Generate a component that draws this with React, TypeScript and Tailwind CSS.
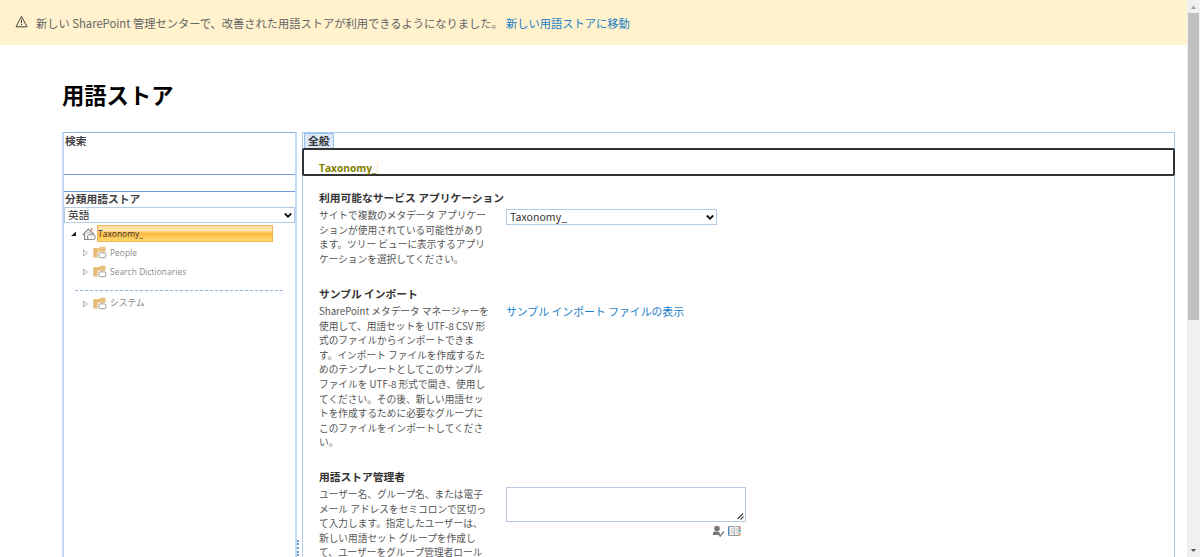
import type { ReactNode } from 'react';

const applicationText = [
  'サイトで複数のメタデータ アプリケー',
  'ションが使用されている可能性があり',
  'ます。ツリー ビューに表示するアプリ',
  'ケーションを選択してください。',
];

const importText = [
  'SharePoint メタデータ マネージャーを',
  '使用して、用語セットを UTF-8 CSV 形',
  '式のファイルからインポートできま',
  'す。インポート ファイルを作成するた',
  'めのテンプレートとしてこのサンプル',
  'ファイルを UTF-8 形式で開き、使用し',
  'てください。その後、新しい用語セッ',
  'トを作成するために必要なグループに',
  'このファイルをインポートしてくださ',
  'い。',
];

const adminText = [
  'ユーザー名、グループ名、または電子',
  'メール アドレスをセミコロンで区切っ',
  'て入力します。指定したユーザーは、',
  '新しい用語セット グループを作成し',
  'て、ユーザーをグループ管理者ロール',
];

function Chevron() {
  return (
    <svg className="pointer-events-none absolute right-[3px] top-[5px]" width="8" height="7" viewBox="0 0 8 7" fill="none">
      <path d="M0.8 1.5 L4 4.7 L7.2 1.5" stroke="#111" strokeWidth="1.8" />
    </svg>
  );
}

function Select({ value }: { value: string }) {
  return (
    <div className="relative">
      <select className="block h-4 w-full appearance-none border border-[#b4cbe2] bg-white pl-[3px] leading-[14px] text-[#333]">
        <option>{value}</option>
      </select>
      <Chevron />
    </div>
  );
}

function FolderIcon() {
  return (
    <svg width="14" height="13" viewBox="0 0 14 13">
      <path d="M0.5 2 H6 L7 0.8 H12.5 V11 H0.5 Z" fill="#e9c27f" />
      <path d="M0.5 3.5 L4 3 V11.5 H0.5 Z" fill="#e6ba72" />
      <rect x="4.6" y="5.8" width="9.4" height="7" fill="#fff" />
      <rect x="5.8" y="6.9" width="7" height="4.8" rx="1.6" fill="#fff" stroke="#999" />
    </svg>
  );
}

function HomeIcon() {
  return (
    <svg width="14" height="14" viewBox="0 0 14 14" fill="none">
      <path d="M0.8 7.8 L6.5 2 L12 7.5 M2.6 7 V12.5 H6" stroke="#888" strokeWidth="1.2" />
      <path d="M9.6 1 V3.6" stroke="#dd6a52" strokeWidth="1.3" />
      <path d="M4.2 7.4 L6.5 5 L9 7" stroke="#aaa" />
      <rect x="5.6" y="7.6" width="7.4" height="5" rx="1.6" fill="#f8f8f8" stroke="#888" />
    </svg>
  );
}

function TreeItem({ label }: { label: string }) {
  return (
    <div className="flex h-[19px] items-center pl-[19px]">
      <svg width="5" height="8" viewBox="0 0 5 8" fill="none">
        <path d="M0.6 1 V7 L4.3 4 Z" stroke="#aaa" strokeWidth="0.9" />
      </svg>
      <span className="ml-[5px] w-4">
        <FolderIcon />
      </span>
      <span className="ml-px whitespace-nowrap pt-px text-[#888]">{label}</span>
    </div>
  );
}

function Section({ title, lines, children, className }: { title: string; lines: string[]; children: ReactNode; className: string }) {
  return (
    <section className={className}>
      <h3 className="h-[17px] whitespace-nowrap text-[10.75px] font-bold leading-[17px] text-[#333]">{title}</h3>
      <div className="flex">
        <div className="w-[187px] shrink-0 pt-[2px] text-[9.7px] leading-[14.6px] text-[#555]">
          {lines.map((line) => (
            <div key={line} className="whitespace-nowrap">{line}</div>
          ))}
        </div>
        {children}
      </div>
    </section>
  );
}

export default function App() {
  return (
    <div className="flex h-[557px] w-[1200px] overflow-hidden bg-white font-['Noto_Sans_CJK_JP',sans-serif]">
      <div className="flex w-[1187px] shrink-0 flex-col">
        <header className="flex h-[45px] shrink-0 items-center bg-[#fff2cc] pl-[15px] pt-px text-[11.25px] leading-[17px] text-[#666]">
          <svg className="-mt-[3px]" width="13" height="13" viewBox="0 0 13 13" fill="none">
            <path d="M6.5 1.3 L12 11.8 H1 Z" stroke="#444" />
            <path d="M6.5 4.4 V8.2 M6.5 9 V10.2" stroke="#444" />
          </svg>
          <span className="ml-2 whitespace-nowrap">
            新しい SharePoint 管理センターで、改善された用語ストアが利用できるようになりました。
          </span>
          <a href="#" className="ml-[3px] whitespace-nowrap text-[#1a7fc9]">新しい用語ストアに移動</a>
        </header>

        <h1 className="mt-8 h-9 shrink-0 pl-[62px] text-[22.3px] font-bold leading-[34px] text-black">用語ストア</h1>

        <main className="mt-[19px] flex min-h-0 grow pl-[62px]">
          <aside className="w-[235px] border-x-2 border-t border-x-[#c3d9f5] border-t-[#8db2e3] text-[10.75px]">
            <div className="h-[42px] border-b border-[#6f9ddd] pl-px font-bold leading-4 text-[#444]">検索</div>
            <div className="h-[17px] border-b border-[#6f9ddd]" />
            <div className="h-[15px] pl-px font-bold leading-[14px] text-[#444]">分類用語ストア</div>
            <Select value="英語" />
            <div className="font-['Open_Sans','Noto_Sans_CJK_JP',sans-serif] text-[8.3px] tracking-[0.1px]">
              <div className="mt-px flex h-[19px] items-center pl-[7px]">
                <svg width="6" height="6" viewBox="0 0 6 6">
                  <path d="M5 0.5 V5 H0 Z" fill="#222" />
                </svg>
                <span className="ml-[5px] w-4">
                  <HomeIcon />
                </span>
                <span className="-ml-px h-[17px] w-[176px] border border-[#f2b556] bg-linear-to-b from-[#ffe3a6] from-30% via-[#ffb73c] via-50% to-[#ffdb70] leading-[15px] text-[#333]">
                  Taxonomy_
                </span>
              </div>
              <TreeItem label="People" />
              <TreeItem label="Search Dictionaries" />
              <div className="mb-[3px] ml-[11px] mt-[9px] w-[208px] border-t border-dashed border-[#8fb4e0]" />
              <div className="text-[8.7px]">
                <TreeItem label="システム" />
              </div>
            </div>
          </aside>

          <div className="flex w-[5px] pt-[408px]">
            <div className="h-4 border-l-2 border-dotted border-[#6f94c4]" />
          </div>

          <div className="w-[873px] border border-b-0 border-[#a8c8f0]">
            <div className="ml-px h-[15px] w-[30px] border border-b-0 border-[#9fbfe8] bg-[#dce9fa] pl-[3px] text-[10.75px] font-bold leading-[14px] text-[#333]">
              全般
            </div>
            <div className="-mx-px flex h-7 items-end rounded-[2px] border-2 border-[#333] pl-[15px]">
              <span className="border-r border-[#ffe9bd] pr-px font-['Open_Sans',sans-serif] text-[10.2px] font-bold leading-[12px] text-[#808000]">Taxonomy_</span>
            </div>

            <div className="pl-4">
              <Section title="利用可能なサービス アプリケーション" lines={applicationText} className="mt-[13px] h-[96px]">
                <div className="mt-[3px] w-[211px] text-[10.6px]">
                  <Select value="Taxonomy_" />
                </div>
              </Section>
              <Section title="サンプル インポート" lines={importText} className="h-[183px]">
                <a href="#" className="mt-px h-4 whitespace-nowrap text-[10.85px] leading-4 text-[#1a7fc9]">サンプル インポート ファイルの表示</a>
              </Section>
              <Section title="用語ストア管理者" lines={adminText} className="h-[90px]">
                <div className="flex flex-col items-end">
                  <div className="mt-[2px] flex h-[35px] w-[240px] items-end justify-end border border-[#b8c9dc] p-px">
                    <svg width="7" height="7" viewBox="0 0 7 7">
                      <path d="M0.5 6 L6 0.5 M3.5 6.5 L6.5 3.5" stroke="#444" strokeWidth="1.2" />
                    </svg>
                  </div>
                  <div className="mr-[5px] mt-[3px] flex gap-[3px]">
                    <svg width="12" height="13" viewBox="0 0 12 13">
                      <circle cx="4" cy="3.5" r="2.8" fill="#777" />
                      <path d="M0 10 V8 Q0 6.5 2 6.5 H5 Q7 6.5 7 9 V10 Z" fill="#777" />
                      <path d="M5 8.5 L7.2 11 L11 6.5" fill="none" stroke="#888" strokeWidth="1.5" />
                    </svg>
                    <svg width="13" height="12" viewBox="0 0 13 12" fill="none">
                      <path d="M1 1.5 H5 L6.2 2.2 L7.5 1.5 H11 V10.5 H1 Z M6.2 2.5 V10" stroke="#999" />
                      <path d="M2.5 4 H5 M2.5 6 H5 M2.5 8 H5 M7.5 4 H10 M7.5 6 H10 M7.5 8 H10" stroke="#aaa" strokeWidth="0.8" />
                      <path d="M0.6 1.5 V10.5" stroke="#3b86c4" />
                      <path d="M12 1.5 V4" stroke="#d66" strokeWidth="1.4" />
                      <path d="M12 4.5 V7" stroke="#569ac9" strokeWidth="1.4" />
                      <path d="M12 8 V10.5" stroke="#d79a46" strokeWidth="1.4" />
                    </svg>
                  </div>
                </div>
              </Section>
            </div>
          </div>
        </main>
      </div>

      <div className="flex w-[13px] shrink-0 flex-col items-center bg-[#f0f0f0]">
        <svg className="shrink-0" width="13" height="13" viewBox="0 0 13 13">
          <path d="M4 9 L6.5 5.5 L9 9 Z" fill="#a0a0a0" />
        </svg>
        <div className="h-[307px] w-[11px] shrink-0 bg-[#c1c1c1]" />
        <svg className="mt-auto shrink-0" width="13" height="13" viewBox="0 0 13 13">
          <path d="M4 5 L6.5 8 L9 5 Z" fill="#505050" />
        </svg>
      </div>
    </div>
  );
}
